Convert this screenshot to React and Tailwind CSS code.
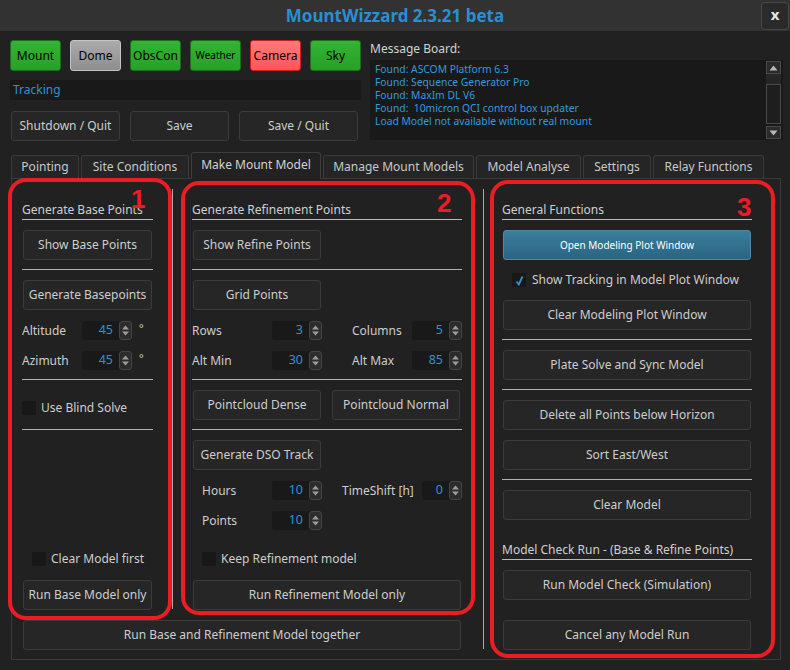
import React from "react";

function Btn({ children, className = "" }) {
  return (
    <div
      className={
        "h-[30px] mx-px flex items-center justify-center whitespace-nowrap rounded-[3px] border border-[#3b3b3b] bg-[#262626] text-[12px] text-[#cdcdcd] " +
        className
      }
    >
      {children}
    </div>
  );
}

function Spin({ value, className = "" }) {
  return (
    <div className={"flex h-[19px] rounded-[3px] bg-[#191919] " + className}>
      <div className="flex-1 flex items-center justify-end pr-[6px] text-[12.5px] text-[#2b93d6]">{value}</div>
      <div className="w-[13px] h-full rounded-[3px] border border-[#454545] bg-[#2c2c2c] flex items-center justify-center">
        <svg width="9" height="15" viewBox="0 0 9 15">
          <path d="M4.5 2.5 L8 6.5 H1 Z" fill="#9c9c9c" />
          <path d="M1 8.5 H8 L4.5 12.5 Z" fill="#9c9c9c" />
        </svg>
      </div>
    </div>
  );
}

function Header({ children, className = "" }) {
  return (
    <div className={"h-[19px] whitespace-nowrap border-b border-[#b9b9b9] text-[12px] leading-[18px] text-[#cfcfcf] " + className}>
      {children}
    </div>
  );
}

function Sep({ className = "" }) {
  return <div className={"h-px bg-[#b0b0b0] " + className} />;
}

function Check({ checked = false }) {
  return (
    <div className="w-[14px] h-[14px] shrink-0 bg-[#181818] flex items-center justify-center">
      {checked && (
        <svg width="9" height="11" viewBox="0 0 9 11">
          <path d="M1.5 6.5 L3.8 9.5 L7.5 1.5" stroke="#2b93d6" strokeWidth="1.8" fill="none" />
        </svg>
      )}
    </div>
  );
}

function StatusBtn({ children, className = "", textClass = "text-[12px]" }) {
  return (
    <div
      className={
        "w-[51px] h-[31px] rounded-[3px] border flex items-center justify-center text-black " +
        textClass +
        " " +
        className
      }
    >
      {children}
    </div>
  );
}

const green = "bg-gradient-to-b from-[#34b334] to-[#28a028] border-[#1b6f1b]";

export default function App() {
  const tabs = [
    ["Pointing", "w-[68px]", false],
    ["Site Conditions", "w-[108px]", false],
    ["Make Mount Model", "w-[130px]", true],
    ["Manage Mount Models", "w-[151px]", false],
    ["Model Analyse", "w-[105px]", false],
    ["Settings", "w-[68px]", false],
    ["Relay Functions", "w-[111px]", false],
  ];
  const msgs = [
    "Found: ASCOM Platform 6.3",
    "Found: Sequence Generator Pro",
    "Found: MaxIm DL V6",
    "Found:  10micron QCI control box updater",
    "Load Model not available without real mount",
  ];
  return (
    <div className="relative w-[790px] h-[670px] overflow-hidden bg-[#212121] font-['Noto_Sans',sans-serif] text-[#cdcdcd]">
      {/* title bar */}
      <div className="h-[31px] bg-[#323232] grid grid-cols-[1fr_auto_1fr] items-center">
        <div />
        <div className="text-[17px] font-bold text-[#2a8fd0]">MountWizzard 2.3.21 beta</div>
        <div className="flex justify-end pr-px">
          <div className="w-[28px] h-[28px] rounded-[4px] border border-[#474747] bg-[#2a2a2a] flex items-center justify-center text-[15px] font-bold text-[#e6e6e6] leading-none pb-[2px]">
            x
          </div>
        </div>
      </div>

      {/* top area */}
      <div className="flex pl-[10px] pt-[9px]">
        <div className="w-[351px] flex flex-col">
          <div className="flex gap-[9px]">
            <StatusBtn className={green}>Mount</StatusBtn>
            <StatusBtn className="bg-gradient-to-b from-[#ababab] to-[#8e8e8e] border-[#c4c4c4]">Dome</StatusBtn>
            <StatusBtn className={green}>ObsCon</StatusBtn>
            <StatusBtn className={green} textClass="text-[10px]">Weather</StatusBtn>
            <StatusBtn className="bg-gradient-to-b from-[#ff7a7a] to-[#ff5656] border-[#c81f1f]">Camera</StatusBtn>
            <StatusBtn className={green}>Sky</StatusBtn>
          </div>
          <div className="mt-[9px] h-[20px] rounded-[2px] bg-[#191919] pl-[3px] text-[12px] leading-[20px] text-[#2b93d6]">
            Tracking
          </div>
          <div className="mt-[11px] flex">
            <Btn className="w-[109px] ml-[1px]">Shutdown / Quit</Btn>
            <Btn className="w-[99px] ml-[9px]">Save</Btn>
            <Btn className="w-[119px] ml-[9px]">Save / Quit</Btn>
          </div>
        </div>
        <div className="ml-[9px] w-[413px] flex flex-col">
          <div className="h-[20px] text-[12px] leading-[17px] text-[#d2d2d2]">Message Board:</div>
          <div className="h-[80px] bg-[#191919] flex">
            <div className="flex-1 pl-[5px] pt-[3px] text-[10.3px] leading-[13px] text-[#3399dd]">
              {msgs.map((m) => (
                <div key={m} className="whitespace-pre">{m}</div>
              ))}
            </div>
            <div className="w-[15px] mr-[2px] flex flex-col pt-px pb-px">
              <div className="h-[13px] border border-[#4a4a4a] bg-[#2a2a2a] flex items-center justify-center">
                <svg width="9" height="6" viewBox="0 0 9 6"><path d="M4.5 0.5 L8.5 5.5 H0.5 Z" fill="#b8b8b8" /></svg>
              </div>
              <div className="h-[10px] bg-[#262626]" />
              <div className="h-[40px] border border-[#4a4a4a] bg-[#1e1e1e]" />
              <div className="flex-1" />
              <div className="h-[13px] border border-[#4a4a4a] bg-[#2a2a2a] flex items-center justify-center">
                <svg width="9" height="6" viewBox="0 0 9 6"><path d="M0.5 0.5 H8.5 L4.5 5.5 Z" fill="#b8b8b8" /></svg>
              </div>
            </div>
          </div>
        </div>
      </div>

      {/* tabs */}
      <div className="mt-[11px] pl-[11px] flex items-end gap-[2px] h-[26px] relative z-10">
        {tabs.map(([t, w, sel]) =>
          sel ? (
            <div
              key={t}
              className={w + " h-[27px] -mb-px rounded-t-[3px] border border-b-0 border-[#3c3c3c] bg-[#222222] flex items-center justify-center text-[12px] text-[#d2d2d2] pb-[3px]"}
            >
              {t}
            </div>
          ) : (
            <div
              key={t}
              className={w + " h-[23px] rounded-t-[3px] border border-b-0 border-[#3a3a3a] bg-[#252525] flex items-center justify-center text-[12px] text-[#c8c8c8]"}
            >
              {t}
            </div>
          )
        )}
      </div>

      {/* pane */}
      <div className="ml-[11px] w-[770px] h-[482px] border border-[#3a3a3a] flex pl-[10px] pt-[10px]">
        {/* left group */}
        <div className="flex flex-col w-[440px]">
          <div className="flex h-[421px]">
            {/* col 1 */}
            <div className="w-[131px] pt-[12px] flex flex-col">
              <Header>Generate Base Points</Header>
              <Btn className="mt-[10px]">Show Base Points</Btn>
              <Sep className="mt-[9px]" />
              <Btn className="mt-[10px]">Generate Basepoints</Btn>
              <div className="mt-[11px] h-[19px] flex items-center text-[12px]">
                <div className="w-[60px]">Altitude</div>
                <Spin value="45" className="w-[50px]" />
                <div className="ml-[7px] self-start text-[11px] leading-[11px] mt-[1px]">°</div>
              </div>
              <div className="mt-[11px] h-[19px] flex items-center text-[12px]">
                <div className="w-[60px]">Azimuth</div>
                <Spin value="45" className="w-[50px]" />
                <div className="ml-[7px] self-start text-[11px] leading-[11px] mt-[1px]">°</div>
              </div>
              <Sep className="mt-[9px]" />
              <div className="mt-[21px] h-[14px] flex items-center text-[12px]">
                <Check />
                <div className="ml-[5px]">Use Blind Solve</div>
              </div>
              <Sep className="mt-[14px]" />
              <div className="flex-1" />
              <div className="h-[14px] flex items-center text-[12px] pl-[10px]">
                <Check />
                <div className="ml-[5px]">Clear Model first</div>
              </div>
              <Btn className="mt-[14px]">Run Base Model only</Btn>
            </div>
            <div className="ml-[19px] w-px h-[420px] bg-[#a8a8a8]" />
            {/* col 2 */}
            <div className="ml-[19px] w-[270px] pt-[12px] flex flex-col">
              <Header>Generate Refinement Points</Header>
              <Btn className="mt-[10px] w-[128px]">Show Refine Points</Btn>
              <Sep className="mt-[9px]" />
              <Btn className="mt-[10px] w-[128px]">Grid Points</Btn>
              <div className="mt-[11px] h-[19px] flex items-center text-[12px]">
                <div className="w-[80px]">Rows</div>
                <Spin value="3" className="w-[50px]" />
                <div className="ml-[30px] w-[60px]">Columns</div>
                <Spin value="5" className="w-[50px]" />
              </div>
              <div className="mt-[11px] h-[19px] flex items-center text-[12px]">
                <div className="w-[80px]">Alt Min</div>
                <Spin value="30" className="w-[50px]" />
                <div className="ml-[30px] w-[60px]">Alt Max</div>
                <Spin value="85" className="w-[50px]" />
              </div>
              <Sep className="mt-[9px]" />
              <div className="mt-[10px] flex">
                <Btn className="w-[128px]">Pointcloud Dense</Btn>
                <Btn className="w-[128px] ml-[10px]">Pointcloud Normal</Btn>
              </div>
              <Sep className="mt-[9px]" />
              <Btn className="mt-[10px] w-[128px]">Generate DSO Track</Btn>
              <div className="mt-[11px] h-[19px] flex items-center text-[12px]">
                <div className="w-[80px] pl-[10px]">Hours</div>
                <Spin value="10" className="w-[50px]" />
                <div className="ml-[20px] w-[80px]">TimeShift [h]</div>
                <Spin value="0" className="w-[40px]" />
              </div>
              <div className="mt-[11px] h-[19px] flex items-center text-[12px]">
                <div className="w-[80px] pl-[10px]">Points</div>
                <Spin value="10" className="w-[50px]" />
              </div>
              <div className="flex-1" />
              <div className="h-[14px] flex items-center text-[12px] pl-[10px]">
                <Check />
                <div className="ml-[5px]">Keep Refinement model</div>
              </div>
              <Btn className="mt-[14px]">Run Refinement Model only</Btn>
            </div>
          </div>
          <Btn className="mt-[10px]">Run Base and Refinement Model together</Btn>
        </div>
        <div className="ml-[21px] w-px h-[460px] bg-[#a8a8a8]" />
        {/* col 3 */}
        <div className="ml-[18px] w-[250px] pt-[12px] flex flex-col">
          <Header>General Functions</Header>
          <div className="mt-[10px] mx-px h-[30px] rounded-[3px] border border-[#4f89a6] bg-gradient-to-b from-[#3a7d9c] to-[#2a6582] flex items-center justify-center text-[10px] text-white">
            Open Modeling Plot Window
          </div>
          <div className="mt-[13px] h-[14px] flex items-center text-[12px] pl-[10px] whitespace-nowrap">
            <Check checked />
            <div className="ml-[6px]">Show Tracking in Model Plot Window</div>
          </div>
          <Btn className="mt-[13px]">Clear Modeling Plot Window</Btn>
          <Sep className="mt-[9px]" />
          <Btn className="mt-[10px]">Plate Solve and Sync Model</Btn>
          <Sep className="mt-[9px]" />
          <Btn className="mt-[10px]">Delete all Points below Horizon</Btn>
          <Btn className="mt-[10px]">Sort East/West</Btn>
          <Sep className="mt-[9px]" />
          <Btn className="mt-[10px]">Clear Model</Btn>
          <Header className="mt-[21px]">Model Check Run - (Base &amp; Refine Points)</Header>
          <Btn className="mt-[10px]">Run Model Check (Simulation)</Btn>
          <Btn className="mt-[20px]">Cancel any Model Run</Btn>
        </div>
      </div>

      {/* red annotations overlay */}
      <div className="absolute left-[8px] top-[178px] w-[164px] h-[442px] rounded-[18px] border-[4px] border-[#ec1c24]" />
      <div className="absolute left-[181px] top-[181px] w-[294px] h-[434px] rounded-[18px] border-[4px] border-[#ec1c24]" />
      <div className="absolute left-[490px] top-[180px] w-[285px] h-[478px] rounded-[18px] border-[4px] border-[#ec1c24]" />
      <div className="absolute left-[131px] top-[184px] font-['Liberation_Sans',sans-serif] font-bold text-[26px] leading-[30px] text-[#ec1c24]">1</div>
      <div className="absolute left-[437px] top-[188px] font-['Liberation_Sans',sans-serif] font-bold text-[26px] leading-[30px] text-[#ec1c24]">2</div>
      <div className="absolute left-[737px] top-[192px] font-['Liberation_Sans',sans-serif] font-bold text-[26px] leading-[30px] text-[#ec1c24]">3</div>
    </div>
  );
}
